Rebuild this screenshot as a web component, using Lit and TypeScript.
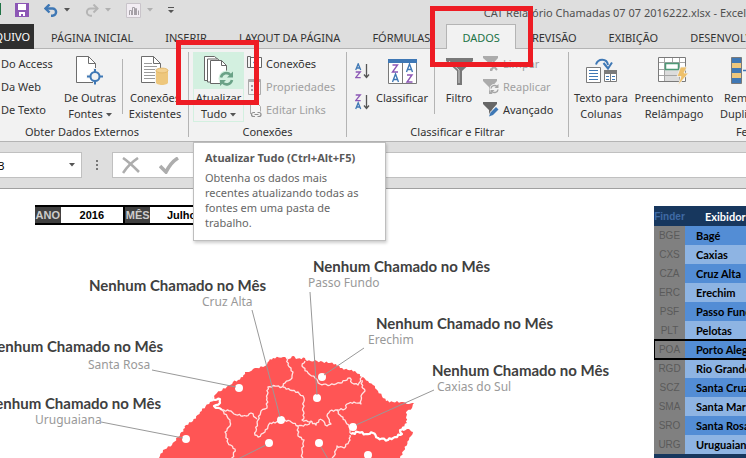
import { LitElement, html, css, svg, nothing } from "lit";
import { customElement, property } from "lit/decorators.js";
import { classMap } from "lit/directives/class-map.js";
import { styleMap } from "lit/directives/style-map.js";

const caret = (color = "#555") => html`<svg class="caret" width="6" height="4" viewBox="0 0 6 4" aria-hidden="true">
  <path d="M0 0h6L3 3.6z" fill=${color} />
</svg>`;

const page = svg`<path d="M.5 .5h12l7 7v19h-19z" fill="#fff" stroke="#6d6d6d" /><path d="M12.500 .5v7h7" fill="none" stroke="#6d6d6d" />`;

const icons = {
  save: html`<svg width="14" height="14" viewBox="0 0 14 14"><path d="M0 0h14v14H0z" fill="#8c57b5" /><path d="M3 1h8v6H3zM4 9h6v4H8v-2H6v2H4z" fill="#fff" /></svg>`,
  undo: html`<svg width="14" height="13" viewBox="0 0 14 13"><path d="M1 4.500h7.500a3.600 3.600 0 0 1 0 7.200H7" fill="none" stroke="#3f78b5" stroke-width="2.400" /><path d="M5.500 .5 1.500 4.500l4 4" fill="none" stroke="#3f78b5" stroke-width="2.400" /></svg>`,
  redo: html`<svg width="14" height="13" viewBox="0 0 14 13"><path d="M13 4.500H5.500a3.600 3.600 0 0 0 0 7.200H7" fill="none" stroke="#b5b5b5" stroke-width="2" /><path d="m8.500 .5 4 4-4 4" fill="none" stroke="#b5b5b5" stroke-width="2" /></svg>`,
  chart: html`<svg width="15" height="15" viewBox="0 0 15 15"><path d="M.5 .5h14v14H.5z" fill="#f2edf3" stroke="#c9c4ca" /><path d="M3.500 12V7.500h2V12M6.500 12V4.500h2V12M9.500 12V5.500h1V12M12.500 12V7.500" fill="none" stroke="#a5a0a6" /></svg>`,
  customize: html`<svg width="6" height="6" viewBox="0 0 6 6"><path d="M0 0h6v1H0zM0 3h6L3 6z" fill="#555" /></svg>`,
  sources: html`<svg width="28" height="30" viewBox="0 0 28 30">${page}<path d="M19 12v17M10.500 20.500h17" stroke="#f2f2f2" stroke-width="4" /><circle cx="19" cy="20.500" r="4.500" fill="#f2f2f2" stroke="#3f78b5" stroke-width="2" /><path d="M19 13v4M19 24v4.500M11 20.500h4M23 20.500h4" stroke="#3f78b5" stroke-width="2" /></svg>`,
  existing: html`<svg width="28" height="30" viewBox="0 0 28 30">${page}<path d="M3 7.500h8M3 10.500h13M3 13.500h11M3 16.500h11M3 19.500h11M3 22.500h11" stroke="#9a9a9a" /><path d="M14 12h13v18H14z" fill="#f2f2f2" /><path d="M15 14.500v12c0 3.300 12 3.300 12 0v-12z" fill="#eec77c" /><ellipse cx="21" cy="14.500" rx="6" ry="2.400" fill="#f3d293" stroke="#dfb261" stroke-width=".8" /></svg>`,
  refresh: html`<svg width="30" height="30" viewBox="0 0 30 30"><path d="M.5 .5h10l6 5v19H.5z" fill="#fff" stroke="#666" /><path d="M3.500 3h10l6 5v18h-16z" fill="#fff" stroke="#666" /><path d="M6.500 4.500h11l5 5v18h-16z" fill="#fff" stroke="#666" /><path d="M17.500 4.500v5h5" fill="none" stroke="#666" /><circle cx="22.500" cy="22.500" r="8" fill="#d3f0e0" /><path d="M17 21.500a5.500 5.500 0 0 1 9.500-2.500M28 24a5.500 5.500 0 0 1-9.500 2.500" fill="none" stroke="#6aa287" stroke-width="2.600" /><path d="M29 15.500v6h-6zM16 30v-6h6z" fill="#6aa287" /></svg>`,
  connections: html`<svg width="15" height="15" viewBox="0 0 15 15"><path d="M2.500 1.500h12v10h-12z" fill="#fff" stroke="#666" /><path d="M.5 .5h3v11h-3z" fill="#f2f2f2" stroke="#666" /><path d="m6 6.500 3-3v2h3v2H9v2z" fill="#3f78b5" /></svg>`,
  properties: html`<svg width="15" height="16" viewBox="0 0 15 16"><path d="M1.500 .5h12v15h-12z" fill="#f2f2f2" stroke="#ababab" /><path d="M2 1h11v2H2z" fill="#ababab" /><path d="M4 6h2v2H4zM4 10h2v2H4zM8 6.500h4v1H8zM8 10.500h4v1H8z" fill="#a09aa6" /></svg>`,
  links: html`<svg width="15" height="16" viewBox="0 0 15 16"><path d="M3.500 12V.5h6l4 4v5" fill="#f6f6f6" stroke="#ababab" /><path d="M8 10.500H6.500a2 2 0 1 0 0 4H8M10.500 10.500H12a2 2 0 1 1 0 4h-1.500M7.500 12.500h4" fill="none" stroke="#8f8f8f" stroke-width="1.200" /></svg>`,
  classify: html`<svg width="29" height="25" viewBox="0 0 29 25"><path d="M.5 .5h28v24H.5z" fill="#fff" stroke="#7a7a7a" /><path d="M0 0h29v4H0z" fill="#3f78b5" /><path d="M14.500 4v20" stroke="#7a7a7a" /><g fill="none" stroke-width="1.400"><path d="M4.500 6h5l-5 7h5.500M19 16h5l-5 7h5.500" stroke="#8c57b5" /><path d="m4.500 23 3-8 3 8M5.500 20.500h4M18.500 13l3-8 3 8M19.500 10.500h4" stroke="#3f78b5" /></g></svg>`,
  sortAsc: html`<svg width="15" height="16" viewBox="0 0 15 16"><g fill="none" stroke-width="1.300"><path d="M.7 7 3.200 .8 5.700 7M1.500 5h3.500" stroke="#3f78b5" /><path d="M.7 9h4.600L.7 14.600h5" stroke="#8c57b5" /><path d="M11.500 1v13M9 11.500l2.500 3 2.500-3" stroke="#555" /></g></svg>`,
  sortDesc: html`<svg width="15" height="16" viewBox="0 0 15 16"><g fill="none" stroke-width="1.300"><path d="M.7 1h4.600L.7 6.600h5" stroke="#8c57b5" /><path d="m.7 15 2.500-6.200L5.700 15M1.500 13h3.500" stroke="#3f78b5" /><path d="M11.500 1v13M9 11.500l2.500 3 2.500-3" stroke="#555" /></g></svg>`,
  filter: html`<svg width="27" height="27" viewBox="0 0 27 27"><path d="M0 0h27v3L16 13v14h-5V13L0 3z" fill="#787878" /><path d="m3 3 10 9v13" fill="none" stroke="#d0d0d0" /></svg>`,
  clear: html`<svg width="16" height="15" viewBox="0 0 16 15"><path d="M0 0h15v2L9.500 8v7H7V8L0 2z" fill="#ababab" /><path d="m8 7 6 6M14 7l-6 6" stroke="#f2f2f2" stroke-width="4" /><path d="m8 7 6 7M14 7l-6 7" stroke="#ababab" stroke-width="2" /></svg>`,
  reapply: html`<svg width="16" height="15" viewBox="0 0 16 15"><path d="M0 0h14v2L9.500 7v8H6V8L0 2z" fill="#ababab" /><circle cx="11.500" cy="10" r="5" fill="#f2f2f2" /><path d="M8 9.500a3.500 3.500 0 0 1 6-2M15 10.500a3.500 3.500 0 0 1-6 2" fill="none" stroke="#a5a5a5" stroke-width="1.500" /><path d="M15.500 5v4h-4zM7.500 15v-4h4z" fill="#a5a5a5" /></svg>`,
  advanced: html`<svg width="16" height="15" viewBox="0 0 16 15"><path d="M0 0h14v2L9.500 7v6H6V8L0 2z" fill="#666" /><path d="m5 15 2-5 6-6 3 3-6 6z" fill="#f2f2f2" /><path d="m6 14.500 1.500-4L13 5l2.500 2.500L10 13z" fill="#3f78b5" /></svg>`,
  columns: html`<svg width="31" height="26" viewBox="0 0 31 26"><path d="M.5 9.500h14v15H.5z" fill="#fff" stroke="#7a7a7a" /><path d="M3 12.500h9M3 15.500h9M3 18.500h9M3 21.500h9" stroke="#3f78b5" /><path d="M18.500 12.500h12v11h-12z" fill="#fff" stroke="#7a7a7a" /><path d="M18 12h13v4H18z" fill="#7a7a7a" /><path d="M24.500 16v8" stroke="#7a7a7a" /><path d="M20 18.500h3M20 21.500h3M26 18.500h3M26 21.500h3" stroke="#3f78b5" /><path d="M10 6.500C12 0 21 0 22 7" fill="none" stroke="#3f78b5" stroke-width="2" /><path d="m17.500 5 4.500 5.500L26 4.500" fill="none" stroke="#3f78b5" stroke-width="2" /></svg>`,
  flash: html`<svg width="32" height="30" viewBox="0 0 32 30"><path d="M.5 1.500h27v24H.5z" fill="#fff" stroke="#7a7a7a" /><path d="M7 13h14v12H7z" fill="#dcdcdc" /><path d="M1 6.500h26M1 13.500h26M1 19.500h26M6.500 2v23M14.500 2v5M21.500 2v23" stroke="#a5a5a5" fill="none" /><path d="M7.500 7.500h13v6h-13z" fill="#fff" stroke="#4e9a77" stroke-width="1.500" /><path d="M22.500 11H29l-3 6h4.500L20 29.500l3-9h-4z" fill="#eec06a" stroke="#f2f2f2" stroke-width=".8" /></svg>`,
  dedupe: html`<svg width="32" height="28" viewBox="0 0 32 28"><path d="M.5 .5h10v26H.5z" fill="#3f78b5" stroke="#7a7a7a" /><path d="M1 6h9v5H1zM1 16h9v5H1z" fill="#eec77c" /><path d="M12 13.500h7M16 10.500l3 3-3 3" stroke="#3f78b5" stroke-width="1.500" fill="none" /><path d="M21.500 .5h10v26h-10z" fill="#3f78b5" stroke="#7a7a7a" /></svg>`,
  cancel: html`<svg width="18" height="17" viewBox="0 0 18 17"><path d="M1 1c6 4 11 9 16 14M16 1C10 5 5 10 1 16" fill="none" stroke="#adadad" stroke-width="2.600" /></svg>`,
  confirm: html`<svg width="20" height="17" viewBox="0 0 20 17"><path d="m1 9 6 6C10 9 14 4 19 1" fill="none" stroke="#adadad" stroke-width="3.600" /></svg>`,
};

@customElement("big-command")
class BigCommand extends LitElement {
  @property({ attribute: false }) icon: unknown;
  @property({ attribute: false }) lines: string[] = [];
  @property({ type: Boolean }) menu = false;
  @property({ type: Boolean, reflect: true }) hot = false;

  static styles = css`
    :host { display: block; flex: none; }
    .command {
      display: flex; flex-direction: column; align-items: center; box-sizing: border-box;
      width: 100%; height: 70px; margin: 0; padding: 0; border: 0; background: none;
      font: inherit; color: inherit; line-height: 16px; white-space: nowrap;
    }
    .icon { display: flex; justify-content: center; align-items: center; width: 100%; height: 38px; }
    .caret { margin-left: 3px; vertical-align: middle; }
    :host([hot]) .command { background: linear-gradient(#d3f0e0 37px, #f2f2f2 37px); box-shadow: inset 0 0 0 1px #d3f0e0; }
  `;

  render() {
    const last = this.lines.length - 1;
    return html`<button class="command" type="button">
      <span class="icon">${this.icon}</span>
      ${this.lines.map((line, i) => html`<span>${line}${this.menu && i === last ? caret() : nothing}</span>`)}
    </button>`;
  }
}

@customElement("small-command")
class SmallCommand extends LitElement {
  @property({ attribute: false }) icon: unknown;
  @property() label = "";
  @property({ type: Boolean }) off = false;

  static styles = css`
    :host { display: block; }
    .command {
      display: flex; align-items: center; gap: 4px; height: 23px; margin: 0; padding: 0;
      border: 0; background: none; font: inherit; color: inherit; white-space: nowrap;
    }
    .command:disabled { color: #a0a0a0; }
  `;

  render() {
    return html`<button class="command" type="button" ?disabled=${this.off}>${this.icon}<span>${this.label}</span></button>`;
  }
}

const tabs = ["PÁGINA INICIAL", "INSERIR", "LAYOUT DA PÁGINA", "FÓRMULAS", "DADOS", "REVISÃO", "EXIBIÇÃO", "DESENVOLVEDOR"];

const offices = [
  ["BGE", "Bagé"], ["CXS", "Caxias"], ["CZA", "Cruz Alta"], ["ERC", "Erechim"],
  ["PSF", "Passo Fundo"], ["PLT", "Pelotas"], ["POA", "Porto Alegre"], ["RGD", "Rio Grande"],
  ["SCZ", "Santa Cruz"], ["SMA", "Santa Maria"], ["SRO", "Santa Rosa"], ["URG", "Uruguaiana"],
];

// Positions on the map canvas, from its top left corner.
const places = [
  { city: "Passo Fundo", x: 308, y: 86, sx: 313, sy: 69 },
  { city: "Cruz Alta", x: 202, y: 105, sx: 89, sy: 88 },
  { city: "Erechim", x: 368, y: 143, sx: 376, sy: 126 },
  { city: "Caxias do Sul", x: 437, y: 190, sx: 432, sy: 173 },
  { city: "Santa Rosa", x: 88, y: 168, sx: -14, sy: 149 },
  { city: "Uruguaiana", x: 35, y: 223, sx: -16, sy: 206 },
];

type Point = [number, number];

// A path through the points, with a small zigzag between them as on a coastline.
const rough = (points: Point[], amount: number) => {
  let d = `M${points[0]}`;
  for (let i = 1; i < points.length; i++) {
    const [ax, ay] = points[i - 1];
    const [bx, by] = points[i];
    const length = Math.hypot(bx - ax, by - ay) || 1;
    const steps = Math.max(1, Math.round(length / 2));
    for (let s = 1; s <= steps; s++) {
      const t = s / steps;
      const shift = s === steps ? 0 : Math.sin((i * 7 + s) * 2.3) * amount;
      d += `L${(ax + (bx - ax) * t - ((by - ay) / length) * shift).toFixed(1)} ${(ay + (by - ay) * t + ((bx - ax) / length) * shift).toFixed(1)}`;
    }
  }
  return d;
};

const outline: Point[] = [
  [154, 470], [159, 458], [163, 450], [172, 445], [178, 437], [185, 428], [186, 425], [193, 421], [200, 412], [210, 402],
  [214, 401], [212, 397], [217, 393], [230, 385], [233, 382], [238, 380], [243, 377], [245, 372], [249, 372], [253, 369],
  [265, 366], [269, 361], [273, 358], [283, 357], [289, 359], [294, 356], [296, 359], [305, 358], [307, 361], [317, 361],
  [330, 363], [336, 364], [340, 368], [348, 370], [355, 371], [362, 377], [368, 381], [373, 385], [378, 391], [386, 401],
  [393, 402], [403, 402], [409, 404], [414, 403], [412, 408], [407, 411], [406, 418], [407, 423], [402, 427], [403, 431],
  [409, 429], [413, 432], [409, 440], [400, 458], [396, 470],
];

const borders: Point[][] = [
  [[287, 358], [288, 365], [293, 372], [292, 378], [285, 383], [282, 387], [275, 386], [268, 387], [267, 398], [267, 408], [261, 411], [258, 420], [255, 435], [258, 437], [265, 432], [270, 423], [275, 423], [281, 420], [290, 421], [298, 426], [307, 425], [312, 421]],
  [[283, 387], [290, 390], [298, 392], [304, 398], [303, 408], [304, 417], [302, 420], [310, 422]],
  [[305, 361], [302, 366], [308, 373], [315, 378], [320, 384], [330, 385], [340, 383], [350, 378], [352, 383], [358, 385], [362, 377]],
  [[362, 380], [362, 387], [365, 391], [361, 396], [361, 404], [354, 402], [347, 404], [345, 409], [337, 410], [330, 411], [327, 416], [331, 424], [327, 426], [322, 420], [319, 420], [316, 425], [310, 421]],
  [[337, 410], [340, 415], [345, 420], [349, 427], [351, 434]],
  [[350, 435], [350, 440], [344, 448], [337, 446], [334, 456], [332, 460]],
  [[298, 426], [298, 436], [304, 440], [302, 450], [302, 460]],
  [[222, 410], [231, 411], [234, 414], [243, 416], [246, 416], [251, 413], [257, 419]],
  [[222, 410], [230, 420], [230, 426], [225, 432], [228, 443], [235, 449], [232, 460]],
];

const rivers: Point[][] = [
  [[212, 396], [215, 400], [220, 399], [220, 403], [214, 406], [222, 410]],
  [[351, 434], [358, 432], [366, 434], [373, 433], [378, 438], [388, 440], [395, 437], [402, 434], [400, 430], [407, 427]],
];

@customElement("app-root")
class AppRoot extends LitElement {
  static styles = css`
    :host {
      display: flex; flex-direction: column; min-height: 100vh; position: relative; overflow: hidden;
      background: #fff; color: #333; font: 11px "Noto Sans", "Open Sans", sans-serif;
    }
    button, input { font: inherit; color: inherit; margin: 0; padding: 0; border: 0; background: none; }
    svg { display: block; flex: none; }
    .titlebar { display: flex; align-items: center; height: 24px; padding-left: 15px; background: linear-gradient(#217346, #217346) 0 3px / 1px 12px no-repeat #dedede; }
    .quick { display: flex; align-items: center; gap: 15px; padding-bottom: 4px; }
    .pair { display: flex; align-items: center; gap: 6px; }
    .title { margin-left: auto; color: #505050; white-space: nowrap; }
    .tabs { display: flex; height: 25px; box-sizing: border-box; background: #dedede; box-shadow: inset 0 -1px #b4b4b4; overflow: hidden; }
    .tab { flex: none; padding: 0 15px; border: 1px solid transparent; border-bottom: 0; white-space: nowrap; }
    .tab.active { border-color: #b4b4b4; background: #f2f2f2; color: #217346; }
    .file { display: flex; justify-content: flex-end; align-items: center; flex: none; width: 34px; margin-right: 1px; padding-right: 4px; box-sizing: border-box; overflow: hidden; background: #2f2f2f; color: #fff; }
    .ribbon { display: flex; height: 93px; box-sizing: border-box; border-bottom: 1px solid #b4b4b4; background: #f2f2f2; overflow: hidden; }
    .group { display: flex; flex-direction: column; flex: none; box-sizing: border-box; margin: 3px 0 4px; border-right: 1px solid #b4b4b4; }
    .row { display: flex; height: 73px; }
    .caption { padding-top: 2px; line-height: 16px; text-align: center; }
    .line { width: 1px; height: 55px; margin-top: 7px; background: #b4b4b4; }
    .external { width: 189px; }
    .external .caption { padding-right: 24px; }
    .links { width: 158px; }
    .links .row { padding-left: 4px; gap: 3px; }
    .sorting { width: 222px; }
    .sorting .row { padding-left: 8px; }
    .tools { width: 452px; }
    .sources { width: 57px; padding-left: 1px; }
    .w51 { width: 51px; }
    .w64 { width: 64px; }
    .w48 { width: 48px; }
    .w82 { width: 82px; }
    .sorts { display: flex; flex-direction: column; gap: 15px; padding-top: 11px; }
    .formula { display: flex; align-items: center; height: 47px; box-sizing: border-box; border-bottom: 1px solid #a0a0a0; background: #dedede; }
    .box { display: flex; align-items: center; height: 26px; box-sizing: border-box; border: 1px solid #c0c0c0; background: #fff; }
    .name { width: 92px; margin-left: -10px; padding-right: 6px; }
    .name input { flex: 1; min-width: 0; color: #000; }
    .dots { margin: 0 13px; width: 4px; }
    .entry { flex: 1; gap: 19px; padding-left: 9px; border-right: 0; }
    .entry input { flex: 1; min-width: 0; }
    .sheet { display: flex; flex: 1; align-items: flex-start; overflow: hidden; }
    .canvas { position: relative; flex: 1; min-width: 0; height: 269px; }
    .map { position: absolute; left: 0; top: 0; }
    .period { position: absolute; left: 35px; top: 16px; width: 180px; border-collapse: collapse; border-top: 2px solid #000; border-bottom: 2px solid #000; font: bold 11px "Liberation Sans", sans-serif; color: #000; }
    .period th, .period td { height: 16px; padding: 0; text-align: center; }
    .period th { width: 24px; background: #404040; color: #ccc; }
    .period td { width: 60px; border-right: 2px solid #000; }
    .status, .city { position: absolute; white-space: nowrap; line-height: 16px; }
    .status { font: bold 15px/16px "Lato", "Noto Sans", sans-serif; color: #404040; }
    .city { font-size: 12px; color: #999; }
    .offices { flex: none; width: 92px; margin-top: 17px; overflow: hidden; border-bottom: 5px solid #17375e; }
    .codes { width: 160px; table-layout: fixed; border-collapse: collapse; color: #000; font: bold 11px "Lato", "Noto Sans", sans-serif; }
    .codes th, .codes td { height: 19px; box-sizing: border-box; padding: 0; line-height: 17px; white-space: nowrap; }
    .codes thead th { height: 20px; background: #17375e; color: #fff; }
    .codes .code { width: 31px; background: #808080; color: #5a5a5a; font: 10px "Liberation Sans", sans-serif; text-align: center; }
    .codes thead .code { background: #17375e; color: #3f6aa5; font-weight: bold; }
    .codes thead .holder { padding-left: 20px; text-align: left; }
    .codes td { padding-left: 11px; background: #8eb4e3; }
    .codes .odd td { background: #538dd5; }
    .codes .chosen { outline: 2px solid #000; outline-offset: -1px; }
    .tooltip { position: absolute; left: 193px; top: 142px; width: 193px; height: 99px; box-sizing: border-box; padding: 7px 11px; border: 1px solid #bebebe; background: #fff; box-shadow: 1px 2px 3px #0003; color: #666; line-height: 15px; }
    .tooltip h2 { margin: 0 0 5px; font-size: 11px; line-height: 15px; color: #595959; white-space: nowrap; }
    .tooltip p { margin: 0; }
    .mark { position: absolute; box-sizing: border-box; border: 5px solid #ee1c24; pointer-events: none; }
    .mark.refresh { left: 176px; top: 40px; width: 83px; height: 65px; }
    .mark.data { left: 430px; top: 6px; width: 103px; height: 61px; }
  `;

  private renderMap() {
    return html`<svg class="map" width="640" height="269" viewBox="0 189 640 269" aria-hidden="true">
      <path fill="#ff5555" d="${rough(outline, 0.9)}z" />
      <g fill="none" stroke="#ffe3e3" stroke-width="1.300" stroke-linejoin="round">
        ${borders.map((line) => svg`<path d=${rough(line, 0.8)} />`)}
      </g>
      <g fill="none" stroke="#fff" stroke-width="2.200" stroke-linejoin="round">
        ${rivers.map((line) => svg`<path d=${rough(line, 1)} />`)}
      </g>
      <g fill="#fff">
        ${[[239, 388], [186, 439], [281, 420], [317, 398], [322, 377], [353, 427], [269, 443], [319, 443], [368, 455]].map(
          ([cx, cy]) => svg`<circle cx=${cx} cy=${cy} r="4" />`,
        )}
      </g>
      <g stroke="#999">
        <path d="M152 370l84 17M101 422l82 16M252 310l28 107M310 292l7 103M364 348l-40 27M434 390l-78 35M266 445l-28 14M321 447l7 12" />
      </g>
    </svg>`;
  }

  render() {
    return html`
      <header class="titlebar">
        <div class="quick">
          <button type="button" aria-label="Salvar">${icons.save}</button>
          <button class="pair" type="button" aria-label="Desfazer">${icons.undo}${caret()}</button>
          <button class="pair" type="button" aria-label="Refazer">${icons.redo}${caret("#b0b0b0")}</button>
          <button class="pair" type="button" aria-label="Gráfico">${icons.chart}${caret("#b0b0b0")}</button>
          <button type="button" aria-label="Personalizar">${icons.customize}</button>
        </div>
        <span class="title">CAT Relatório Chamadas 07 07 2016222.xlsx - Excel</span>
      </header>
      <nav class="tabs">
        <button class="file" type="button">ARQUIVO</button>
        ${tabs.map((tab) => html`<button type="button" class=${classMap({ tab: true, active: tab === "DADOS" })}>${tab}</button>`)}
      </nav>
      <section class="ribbon">
        <div class="group external">
          <div class="row">
            <div class="sources">
              <small-command label="Do Access"></small-command>
              <small-command label="Da Web"></small-command>
              <small-command label="De Texto"></small-command>
            </div>
            <big-command class="w64" .icon=${icons.sources} .lines=${["De Outras", "Fontes"]} menu></big-command>
            <div class="line"></div>
            <big-command class="w64" .icon=${icons.existing} .lines=${["Conexões", "Existentes"]}></big-command>
          </div>
          <div class="caption">Obter Dados Externos</div>
        </div>
        <div class="group links">
          <div class="row">
            <big-command class="w51" .icon=${icons.refresh} .lines=${["Atualizar", "Tudo"]} menu hot></big-command>
            <div>
              <small-command .icon=${icons.connections} label="Conexões"></small-command>
              <small-command .icon=${icons.properties} label="Propriedades" off></small-command>
              <small-command .icon=${icons.links} label="Editar Links" off></small-command>
            </div>
          </div>
          <div class="caption">Conexões</div>
        </div>
        <div class="group sorting">
          <div class="row">
            <div class="sorts">
              <button type="button" aria-label="Classificar de A a Z">${icons.sortAsc}</button>
              <button type="button" aria-label="Classificar de Z a A">${icons.sortDesc}</button>
            </div>
            <big-command class="w64" .icon=${icons.classify} .lines=${["Classificar"]}></big-command>
            <div class="line"></div>
            <big-command class="w48" .icon=${icons.filter} .lines=${["Filtro"]}></big-command>
            <div>
              <small-command .icon=${icons.clear} label="Limpar" off></small-command>
              <small-command .icon=${icons.reapply} label="Reaplicar" off></small-command>
              <small-command .icon=${icons.advanced} label="Avançado"></small-command>
            </div>
          </div>
          <div class="caption">Classificar e Filtrar</div>
        </div>
        <div class="group tools">
          <div class="row">
            <big-command class="w64" .icon=${icons.columns} .lines=${["Texto para", "Colunas"]}></big-command>
            <big-command class="w82" .icon=${icons.flash} .lines=${["Preenchimento", "Relâmpago"]}></big-command>
            <big-command class="w64" .icon=${icons.dedupe} .lines=${["Remover", "Duplicatas"]}></big-command>
          </div>
          <div class="caption">Ferramentas de Dados</div>
        </div>
      </section>
      <section class="formula">
        <div class="box name">
          <input aria-label="Caixa de nome" value="B3" />
          ${caret()}
        </div>
        <svg class="dots" width="4" height="12" viewBox="0 0 4 12" aria-hidden="true"><path d="M1 1h2v2H1zM1 5h2v2H1zM1 9h2v2H1z" fill="#777" /></svg>
        <div class="box entry">
          <button type="button" aria-label="Cancelar">${icons.cancel}</button>
          <button type="button" aria-label="Inserir">${icons.confirm}</button>
          <input aria-label="Barra de fórmulas" />
        </div>
      </section>
      <main class="sheet">
        <div class="canvas">
          ${this.renderMap()}
          <table class="period">
            <tr><th scope="row">ANO</th><td>2016</td><th scope="row">MÊS</th><td>Julho</td></tr>
          </table>
          ${places.map(
            (p) => html`
              <span class="status" style=${styleMap({ left: `${p.sx}px`, top: `${p.sy}px` })}>Nenhum Chamado no Mês</span>
              <span class="city" style=${styleMap({ left: `${p.x}px`, top: `${p.y}px` })}>${p.city}</span>
            `,
          )}
        </div>
        <div class="offices">
          <table class="codes">
            <thead><tr><th class="code">Finder</th><th class="holder">Exibidor</th></tr></thead>
            <tbody>
              ${offices.map(
                ([code, name], i) => html`<tr class=${classMap({ odd: i % 2 === 0, chosen: code === "POA" })}>
                  <th class="code" scope="row">${code}</th><td>${name}</td>
                </tr>`,
              )}
            </tbody>
          </table>
        </div>
      </main>
      <div class="tooltip" role="tooltip">
        <h2>Atualizar Tudo (Ctrl+Alt+F5)</h2>
        <p>Obtenha os dados mais recentes atualizando todas as fontes em uma pasta de trabalho.</p>
      </div>
      <div class="mark refresh"></div>
      <div class="mark data"></div>
    `;
  }
}
